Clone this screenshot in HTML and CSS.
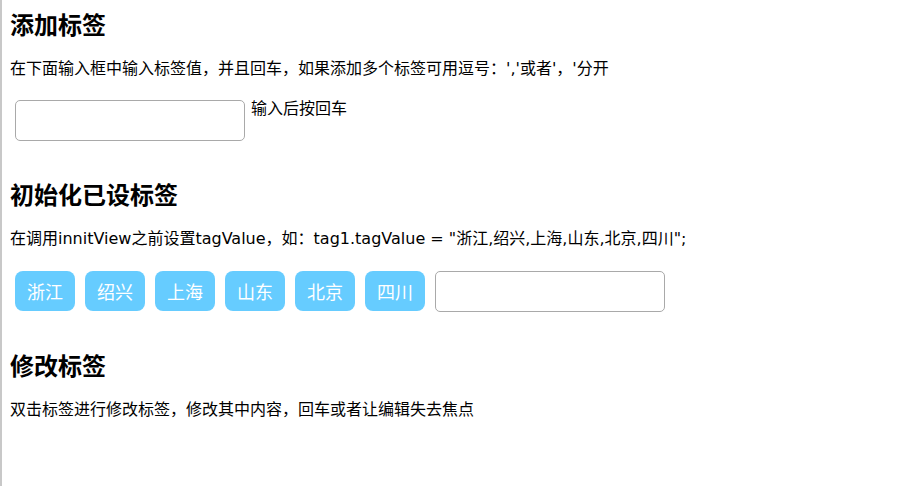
FILE: index.html
```html
<!DOCTYPE html>
<html lang="zh">
<head>
<meta charset="utf-8">
<title>标签</title>
<link rel="stylesheet" href="styles.css">
</head>
<body>
<div class="page">
  <h2 class="title">添加标签</h2>
  <p class="desc">在下面输入框中输入标签值，并且回车，如果添加多个标签可用逗号：','或者'，'分开</p>
  <div class="row">
    <input class="tag-input" type="text">
    <span class="hint">输入后按回车</span>
  </div>

  <h2 class="title">初始化已设标签</h2>
  <p class="desc">在调用innitView之前设置tagValue，如：tag1.tagValue = "浙江,绍兴,上海,山东,北京,四川";</p>
  <div class="row tags">
    <span class="tag">浙江</span>
    <span class="tag">绍兴</span>
    <span class="tag">上海</span>
    <span class="tag">山东</span>
    <span class="tag">北京</span>
    <span class="tag">四川</span>
    <input class="tag-input" type="text">
  </div>

  <h2 class="title">修改标签</h2>
  <p class="desc">双击标签进行修改标签，修改其中内容，回车或者让编辑失去焦点</p>
</div>
</body>
</html>
```
FILE: styles.css
```css
html, body {
  margin: 0;
  padding: 0;
  height: 100%;
  background: #fff;
}
body {
  font-family: "Noto Sans CJK SC", "Noto Sans", sans-serif;
  color: #000;
  font-size: 16px;
}
.page {
  min-height: 100%;
  box-sizing: border-box;
  border-left: 2px solid #c8c8c8;
  padding-left: 8px;
  padding-top: 1px;
}
.title {
  margin: 8px 0 0;
  font-size: 24px;
  line-height: 30px;
  font-weight: bold;
}
.row + .title {
  margin-top: 38px;
}
.desc {
  margin: 20px 0 0;
  line-height: 20px;
  font-size: 16px;
  font-family: "DejaVu Sans", "Noto Sans CJK SC", sans-serif;
}
.row {
  display: flex;
  align-items: flex-start;
  margin-top: 21px;
  padding-left: 5px;
}
.tag-input {
  width: 230px;
  height: 41px;
  box-sizing: border-box;
  margin: 0;
  border: 1px solid #a9a9a9;
  border-radius: 5px;
  background: #fff;
  font-family: inherit;
  font-size: 14px;
  padding: 0 8px;
}
.hint {
  margin-left: 6px;
  line-height: 14px;
  font-size: 16px;
}
.tags {
  gap: 10px;
  margin-top: 22px;
}
.tag {
  width: 60px;
  height: 40px;
  display: flex;
  align-items: center;
  justify-content: center;
  background: #66ccff;
  color: #fff;
  border-radius: 8px;
  font-size: 18px;
}
```
